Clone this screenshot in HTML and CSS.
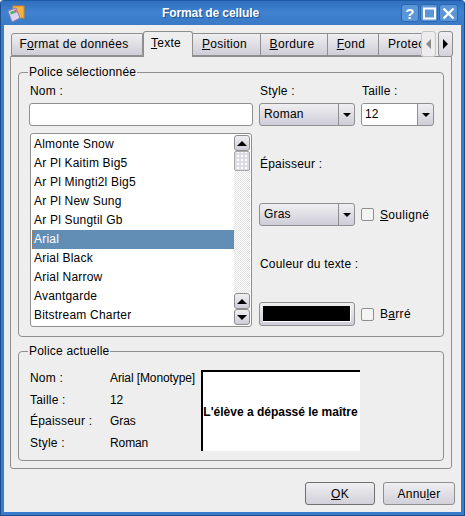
FILE: index.html
```html
<!DOCTYPE html>
<html lang="fr">
  <head>
    <meta charset="UTF-8" />
    <meta name="viewport" content="width=device-width, initial-scale=1" />
    <title>Format de cellule</title>
    <link rel="stylesheet" href="styles.css">
  </head>
  <body>
    <div class="window">
      <div class="titlebar">
        <svg class="app-icon" width="18" height="18" viewBox="0 0 18 18">
          <rect x="6" y="1" width="11" height="12" fill="#f5b43c" stroke="#d9822b"/>
          <path d="M1 6 L9 3 L13 13 L5 17 Z" fill="#d9d4f0" stroke="#8a80b8"/>
          <path d="M3 7 L7 5.5 L8 8 L4 9.5 Z" fill="#46b864"/>
          <path d="M7 5 L9 4.5 L10 7 L8 8 Z" fill="#e2557a"/>
        </svg>
        <span class="title-text">Format de cellule</span>
        <div class="title-buttons">
          <span class="title-btn">?</span>
          <span class="title-btn">
            <svg width="13" height="13" viewBox="0 0 13 13"><rect x="1" y="1.5" width="11" height="10" fill="none" stroke="#fff" stroke-width="2"/></svg>
          </span>
          <span class="title-btn">
            <svg width="13" height="13" viewBox="0 0 13 13"><path d="M1.5 1.5 L11.5 11.5 M11.5 1.5 L1.5 11.5" stroke="#fff" stroke-width="2.4"/></svg>
          </span>
        </div>
      </div>

      <div class="content">
        <div class="tabbar">
          <div class="tabs">
            <div class="tab tab-format">F<u>o</u>rmat de données</div>
            <div class="tab tab-active"><u>T</u>exte</div>
            <div class="tab tab-position"><u>P</u>osition</div>
            <div class="tab tab-bordure"><u>B</u>ordure</div>
            <div class="tab tab-fond"><u>F</u>ond</div>
            <div class="tab tab-protec">Protec</div>
          </div>
          <div class="tab-scroll tab-scroll-off"><span class="arrow-left"></span></div>
          <div class="tab-scroll"><span class="arrow-right"></span></div>
        </div>

        <div class="panel">
          <fieldset class="group group-font">
            <legend>Police sélectionnée</legend>
            <div class="font-grid">
              <label class="field-label">Nom :</label>
              <label class="field-label">Style :</label>
              <label class="field-label">Taille :</label>

              <div class="input"></div>
              <div class="combo"><span class="combo-text">Roman</span><span class="combo-btn"><i class="arrow-down"></i></span></div>
              <div class="combo combo-edit"><span class="combo-text">12</span><span class="combo-btn"><i class="arrow-down"></i></span></div>

              <div class="listbox">
                <ul class="list">
                  <li>Almonte Snow</li>
                  <li>Ar Pl Kaitim Big5</li>
                  <li>Ar Pl Mingti2l Big5</li>
                  <li>Ar Pl New Sung</li>
                  <li>Ar Pl Sungtil Gb</li>
                  <li class="selected">Arial</li>
                  <li>Arial Black</li>
                  <li>Arial Narrow</li>
                  <li>Avantgarde</li>
                  <li>Bitstream Charter</li>
                </ul>
                <div class="scrollbar">
                  <div class="sb-btn"><i class="arrow-up"></i></div>
                  <div class="sb-thumb"></div>
                  <div class="sb-track"></div>
                  <div class="sb-btn"><i class="arrow-up"></i></div>
                  <div class="sb-btn"><i class="arrow-down"></i></div>
                </div>
              </div>

              <div class="side">
                <div class="side-label">Épaisseur :</div>
                <div class="side-row">
                  <div class="combo combo-gras"><span class="combo-text">Gras</span><span class="combo-btn"><i class="arrow-down"></i></span></div>
                  <span class="check"></span><span class="check-text"><u>S</u>ouligné</span>
                </div>
                <div class="side-label">Couleur du texte :</div>
                <div class="side-row">
                  <div class="color-btn"><span class="color-swatch"></span></div>
                  <span class="check"></span><span class="check-text">B<u>a</u>rré</span>
                </div>
              </div>
            </div>
          </fieldset>

          <fieldset class="group group-current">
            <legend>Police actuelle</legend>
            <div class="current">
              <dl class="info">
                <dt>Nom :</dt><dd>Arial [Monotype]</dd>
                <dt>Taille :</dt><dd>12</dd>
                <dt>Épaisseur :</dt><dd>Gras</dd>
                <dt>Style :</dt><dd>Roman</dd>
              </dl>
              <div class="preview">L'élève a dépassé le maître</div>
            </div>
          </fieldset>
        </div>

        <div class="actions">
          <button class="btn btn-ok"><u>O</u>K</button>
          <button class="btn btn-cancel">Annu<u>l</u>er</button>
        </div>
      </div>
    </div>
  </body>
</html>
```

FILE: styles.css
```css
html,
body {
  margin: 0;
  padding: 0;
}

body {
  font-family: "Liberation Sans", Arial, sans-serif;
  font-size: 12px;
  letter-spacing: 0.2px;
  color: #000;
  background: #fff;
}

.window {
  width: 465px;
  height: 516px;
  box-sizing: border-box;
  display: flex;
  flex-direction: column;
  background: #3a7ccb;
  border: 1px solid #1d4f8f;
  border-top-color: #1f5aa6;
  border-radius: 4px 4px 0 0;
  overflow: hidden;
}

/* title bar */
.titlebar {
  height: 24px;
  flex: none;
  display: flex;
  align-items: center;
  background: linear-gradient(#2f6fbd, #3f82d0 45%, #3a7ac6);
}

.app-icon {
  flex: none;
  margin-left: 6px;
  margin-top: 2px;
}

.title-text {
  flex: 1;
  padding-right: 5px;
  text-align: center;
  color: #fff;
  font-weight: bold;
  font-size: 12px;
  letter-spacing: -0.1px;
  text-shadow: 1px 1px 1px #1d4f8f;
}

.title-buttons {
  flex: none;
  margin-right: 6px;
  display: flex;
  gap: 1px;
}

.title-btn {
  width: 16px;
  height: 16px;
  display: flex;
  align-items: center;
  justify-content: center;
  background: #5a96d8;
  border: 1px solid #2c66ae;
  border-radius: 3px;
  color: #fff;
  font-weight: bold;
  font-size: 15px;
}

.title-btn:last-child {
  width: 17px;
}

/* main area */
.content {
  flex: 1;
  margin: 0 3px 3px;
  padding: 6px 6px 0 6px;
  background: #eeeeee;
  display: flex;
  flex-direction: column;
}

.tabbar {
  display: flex;
  height: 26px;
  position: relative;
  z-index: 1;
}

.tabs {
  width: 410px;
  margin-left: 1px;
  display: flex;
  overflow: hidden;
  flex: none;
  align-items: flex-end;
}

.tab {
  flex: none;
  box-sizing: border-box;
  height: 23px;
  margin-bottom: 1px;
  padding-right: 4px;
  line-height: 21px;
  letter-spacing: 0.3px;
  text-align: center;
  background: linear-gradient(#efeff1, #cfcdd8);
  border: 1px solid #8f8f8f;
  border-left-width: 0;
}

.tab-format {
  width: 132px;
  padding-right: 6px;
  border-left-width: 1px;
  border-radius: 3px 0 0 0;
}

.tab-active {
  width: 50px;
  height: 26px;
  margin-bottom: 0;
  line-height: 22px;
  padding-bottom: 2px;
  background: #eeeeee;
  border-left-width: 1px;
  border-bottom: 0;
  border-radius: 3px 3px 0 0;
}

.tab-position {
  width: 68px;
}

.tab-bordure {
  width: 67px;
}

.tab-fond {
  width: 51px;
}

.tab-protec {
  width: 42px;
  padding: 0 0 0 9px;
  text-align: left;
  border-right: 0;
}

.tab-scroll {
  width: 15px;
  height: 26px;
  box-sizing: border-box;
  margin-left: 2px;
  display: flex;
  align-items: center;
  justify-content: center;
  background: linear-gradient(#efeff1, #d4d2dc);
  border: 1px solid #8f8f8f;
  border-radius: 3px;
}

.tab-scroll-off {
  margin-left: 0;
  background: #eeecec;
  border-color: #c4c4c4;
}

.arrow-left,
.arrow-right {
  width: 0;
  height: 0;
  border-top: 5px solid transparent;
  border-bottom: 5px solid transparent;
}

.arrow-left {
  border-right: 5px solid #8a8a8a;
}

.arrow-right {
  border-left: 5px solid #000;
}

.arrow-up,
.arrow-down {
  display: block;
  width: 0;
  height: 0;
  border-left: 5px solid transparent;
  border-right: 5px solid transparent;
}

.arrow-up {
  border-bottom: 5px solid #000;
}

.arrow-down {
  border-top: 5px solid #000;
}

.panel {
  width: 442px;
  height: 413px;
  box-sizing: border-box;
  margin-top: -1px;
  padding: 8px 7px 0;
  border: 1px solid #8f8f8f;
  border-radius: 0 0 3px 3px;
  display: flex;
  flex-direction: column;
  gap: 7px;
}

.group {
  margin: 0;
  padding: 0 0 0 10px;
  border: 1px solid #8f8f8f;
  border-radius: 4px;
  min-width: 0;
}

.group legend {
  padding: 0 1px;
  margin-left: -1px;
  line-height: 14px;
}

.group-font {
  height: 272px;
  box-sizing: border-box;
}

.group-current {
  height: 117px;
  box-sizing: border-box;
}

/* font choice */
.font-grid {
  display: grid;
  grid-template-columns: 224px 96px 73px;
  grid-template-rows: 24px 23px 193px;
  column-gap: 6px;
}

.field-label {
  line-height: 14px;
  padding-left: 1px;
  padding-top: 5px;
}

.input {
  box-sizing: border-box;
  height: 23px;
  background: #fff;
  border: 1px solid #8f8f8f;
  border-radius: 3px;
}

.combo {
  box-sizing: border-box;
  height: 23px;
  display: flex;
  background: linear-gradient(#efeff1, #cfcdd8);
  border: 1px solid #8f8f8f;
  border-radius: 3px;
}

.combo-text {
  flex: 1;
  line-height: 21px;
  padding-left: 4px;
}

.combo-btn {
  width: 15px;
  display: flex;
  align-items: center;
  justify-content: center;
  border-left: 1px solid #8f8f8f;
}

.combo-btn .arrow-down {
  border-left-width: 4px;
  border-right-width: 4px;
  border-top-width: 4px;
}

.combo-edit .combo-text {
  background: #fff;
  border-radius: 2px 0 0 2px;
  padding-left: 3px;
}

.combo-gras {
  width: 96px;
  flex: none;
}

.listbox {
  grid-column: 1;
  box-sizing: border-box;
  width: 222px;
  height: 194px;
  margin: 7px 0 0 1px;
  padding: 1px;
  display: flex;
  background: #fff;
  border: 1px solid #8f8f8f;
  border-radius: 3px;
}

.list {
  flex: 1;
  margin: 0;
  padding: 0;
  list-style: none;
}

.list li {
  height: 19px;
  line-height: 19px;
  padding-left: 2px;
}

.list li.selected {
  background: #628eb6;
  color: #fff;
  outline: 1px dotted #b5793a;
  outline-offset: -1px;
}

.scrollbar {
  width: 16px;
  display: flex;
  flex-direction: column;
}

.sb-btn {
  box-sizing: border-box;
  height: 16px;
  flex: none;
  display: flex;
  align-items: center;
  justify-content: center;
  background: linear-gradient(#efeff1, #cfcdd8);
  border: 1px solid #8f8f8f;
  border-radius: 3px;
}

.sb-thumb {
  box-sizing: border-box;
  height: 20px;
  flex: none;
  background-color: #dcdbe4;
  background-image: radial-gradient(#fff 1px, transparent 1px);
  background-size: 4px 4px;
  background-position: 1px 2px;
  border: 1px solid #a9a9a9;
  border-radius: 2px;
}

.sb-track {
  flex: 1;
  background: repeating-conic-gradient(#e2e2e2 0 25%, #fff 0 50%) 0 0 / 2px 2px;
}

.side {
  grid-column: 2 / span 2;
  display: grid;
  grid-template-rows: 62px 31px 76px 24px;
  margin-top: 7px;
}

.side-label {
  align-self: center;
  padding-left: 1px;
}

.side-row {
  display: flex;
  align-items: center;
  align-self: end;
}

.check {
  box-sizing: border-box;
  width: 13px;
  height: 13px;
  margin: 0 6px;
  background: #f4f4f4;
  border: 1px solid #8f8f8f;
  border-radius: 2px;
}

.check-text {
  letter-spacing: 0.3px;
}

.color-btn {
  box-sizing: border-box;
  width: 96px;
  height: 24px;
  flex: none;
  padding: 3px;
  background: linear-gradient(#efeff1, #cfcdd8);
  border: 1px solid #8f8f8f;
  border-radius: 3px;
}

.color-swatch {
  display: block;
  height: 100%;
  background: #000;
  border-right: 1px solid #fff;
  border-bottom: 1px solid #fff;
  box-sizing: border-box;
}

/* current font */
.current {
  display: flex;
  margin-top: 8px;
}

.info {
  width: 171px;
  margin: 0;
  padding: 1.5px 0 0 1px;
  display: grid;
  grid-template-columns: 80px 1fr;
  grid-auto-rows: 21.6px;
  align-items: center;
  flex: none;
}

.info dd {
  margin: 0;
  white-space: nowrap;
  letter-spacing: -0.1px;
}

.preview {
  width: 159px;
  height: 81px;
  box-sizing: border-box;
  margin-top: 4px;
  padding-right: 2px;
  display: flex;
  align-items: center;
  justify-content: center;
  background: #fff;
  border-top: 2px solid #000;
  border-left: 2px solid #000;
  font-weight: bold;
  font-size: 12px;
  letter-spacing: 0;
  white-space: nowrap;
}

/* dialog buttons */
.actions {
  display: flex;
  justify-content: flex-end;
  gap: 8px;
  margin-top: 13px;
}

.btn {
  box-sizing: border-box;
  height: 23px;
  padding: 0;
  font: inherit;
  letter-spacing: inherit;
  color: #000;
  background: linear-gradient(#efeff1, #d2d0da);
  border: 1px solid #8f8f8f;
  border-radius: 3px;
}

.btn-ok {
  width: 70px;
  border-color: #6f6f6f;
}

.btn-cancel {
  width: 72px;
}
```
